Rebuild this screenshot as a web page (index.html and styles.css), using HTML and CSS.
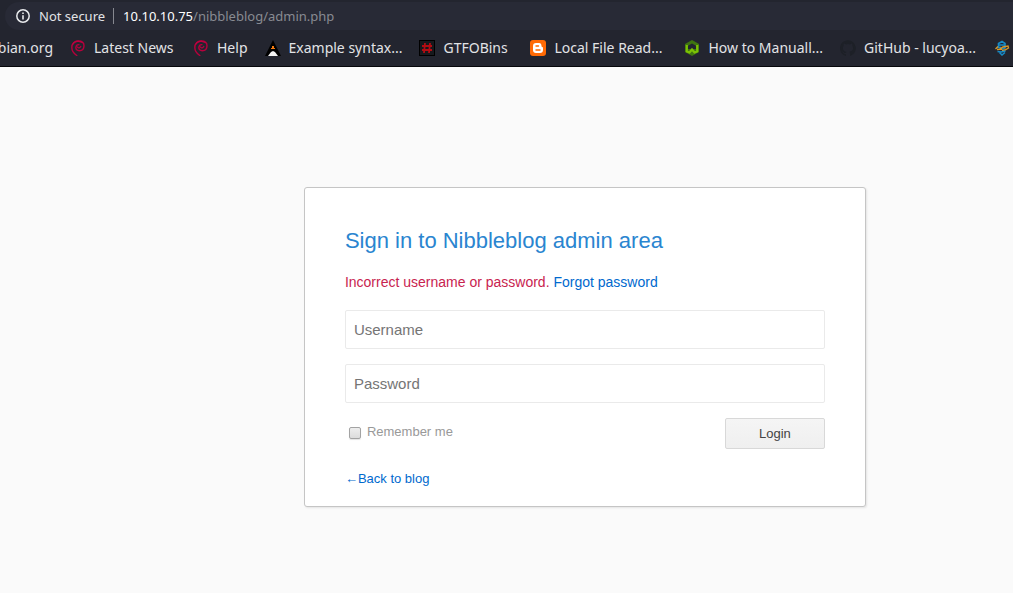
FILE: index.html
```html
<!DOCTYPE html>
<html lang="en">
<head>
<meta charset="utf-8">
<title>Nibbleblog - Sign in</title>
<link rel="stylesheet" href="styles.css">
</head>
<body>
<svg class="defs" aria-hidden="true">
  <symbol id="swirl" viewBox="0 0 16 16">
    <path d="M6.800 15.500C4 13.500 1.800 10.800 1.800 7.400C1.800 3.500 4.500 1 8.300 1C11.800 1 14 3 14 5.800C14 8.800 12 10.700 9.300 10.700C7 10.700 5.700 9.300 5.900 7.300C6.100 5.600 7.400 4.500 8.900 4.600" fill="none" stroke="#b8003c" stroke-width="1.400" stroke-linecap="round"/>
    <path d="M2.600 4.500Q4.500 1.300 8 1.200L12.500 2.500M7.500 7Q9 9.200 10.800 6.500" fill="none" stroke="#c00040" stroke-width="1.200" stroke-linecap="round"/>
  </symbol>
</svg>
<header class="browser">
  <div class="address">
    <svg class="info" viewBox="0 0 14 14" aria-hidden="true"><circle cx="7" cy="7" r="6.200" fill="none" stroke="#e8eaed" stroke-width="1.500"/><path d="M7 6.200V10.500M7 3.500V5" stroke="#e8eaed" stroke-width="1.600"/></svg>
    <span class="security">Not secure</span>
    <span class="url"><span class="host">10.10.10.75</span>/nibbleblog/admin.php</span>
  </div>
  <nav class="bookmarks" aria-label="Bookmarks">
    <a class="bookmark clipped" href="#">bian.org</a>
    <a class="bookmark medium" href="#"><svg viewBox="0 0 16 16"><use href="#swirl"/></svg>Latest News</a>
    <a class="bookmark" href="#"><svg viewBox="0 0 16 16"><use href="#swirl"/></svg>Help</a>
    <a class="bookmark wide" href="#"><svg viewBox="0 0 16 16"><path d="M8 0L16 16H0Z" fill="#000"/><path d="M3 16L6 12L8 11L10 12L13 16Z" fill="#f4f4f4"/><path d="M7 6H9V8H10V9H6V8H7Z" fill="#f47a10"/></svg>Example syntax...</a>
    <a class="bookmark small" href="#"><svg viewBox="0 0 16 16"><path d="M0 0H16V16H0Z" fill="#000"/><path d="M1 1H15V15H1Z" fill="#17191d"/><path d="M6 3L5 13M11 3L10 13M3 6H13M3 10H13" stroke="#b40c12" stroke-width="1.800"/></svg>GTFOBins</a>
    <a class="bookmark wide" href="#"><svg viewBox="0 0 16 16"><rect width="16" height="16" rx="3" fill="#ff6a05"/><path d="M6 3H9C11 3 11.500 4.500 11.500 6Q11.500 7 12.300 7Q13 7 13 8V10Q13 13 10 13H6Q3 13 3 10V6Q3 3 6 3Z" fill="#fff"/><path d="M6 6H8.500M6 10H10" stroke="#ff6a05" stroke-width="1.400" stroke-linecap="round"/></svg>Local File Read...</a>
    <a class="bookmark wide" href="#"><svg viewBox="0 0 16 16"><path d="M8 0L15 4V12L8 16L1 12V4Z" fill="#3f7511"/><path d="M8 3.500L12 5.800V9H4V5.800Z" fill="#23252f"/><path d="M2.800 5V11.500L5.500 12.500L8 9.500L10.500 12.500L13.200 11.500V5" fill="none" stroke="#7cc105" stroke-width="2.200"/></svg>How to Manuall...</a>
    <a class="bookmark wide" href="#"><svg viewBox="0 0 16 16"><path d="M8 .3C3.600.3 0 3.900 0 8.300c0 3.500 2.300 6.500 5.500 7.600.4.1.5-.2.5-.4v-1.500c-2.200.5-2.700-.9-2.700-.9-.4-.9-.9-1.200-.9-1.200-.7-.5.1-.5.1-.5.8.1 1.200.8 1.200.8.7 1.200 1.900.9 2.300.7.1-.5.3-.9.500-1.100-1.800-.2-3.600-.9-3.600-4 0-.9.3-1.600.8-2.100-.1-.2-.4-1 .1-2.100 0 0 .7-.2 2.200.8a7.500 7.500 0 0 1 4 0c1.500-1 2.200-.8 2.200-.8.400 1.100.2 1.900.1 2.100.5.6.8 1.300.8 2.100 0 3.100-1.900 3.700-3.700 3.900.3.3.6.8.6 1.500v2.200c0 .2.100.5.6.4A8 8 0 0 0 8 .3Z" fill="#1d2027"/></svg>GitHub - lucyoa...</a>
    <a class="bookmark" href="#" aria-label="Python bookmark"><svg viewBox="0 0 16 16"><path d="M4.500 7V3.500L8 1.500L11 3.500V8L8 9M3 7.500H7M5 5H11" fill="none" stroke="#168bc8" stroke-width="1.600"/><path d="M1.500 9L4 6.500M5 9.500L9 7L14 6L14.500 8L11 10L8 10.500M3 9.500L8 9" fill="none" stroke="#d5982b" stroke-width="1.400"/><path d="M3.500 11.500L7 12L11.500 11M5.500 12.500L8 15L11 12.500" fill="none" stroke="#168bc8" stroke-width="1.500"/></svg></a>
  </nav>
</header>
<main class="page">
  <form class="card">
    <h1 class="title">Sign in to Nibbleblog admin area</h1>
    <p class="message"><span class="error">Incorrect username or password.</span> <a href="#">Forgot password</a></p>
    <input class="field" type="text" placeholder="Username" aria-label="Username">
    <input class="field" type="password" placeholder="Password" aria-label="Password">
    <div class="actions">
      <label class="remember"><input class="check" type="checkbox">Remember me</label>
      <button class="login" type="submit">Login</button>
    </div>
    <a class="back" href="#">←Back to blog</a>
  </form>
</main>
</body>
</html>
```

FILE: styles.css
```css
* { box-sizing: border-box; }

body {
  margin: 0;
  background: #fafafa;
  font-family: "Liberation Sans", Arial, sans-serif;
}

a { color: #0069ce; text-decoration: none; }

.defs { display: none; }

.browser {
  overflow: hidden;
  background: #23252f;
  border-bottom: 1px solid #06070b;
  font-family: "Noto Sans", sans-serif;
  font-size: 14px;
  line-height: 20px;
  color: #e2e3e6;
}

.address {
  display: flex;
  align-items: center;
  height: 28px;
  margin: 2px 0 0 5px;
  padding-left: 11px;
  background: #282a36;
  border-radius: 14px 0 0 14px;
  font-size: 13px;
}

.info { width: 14px; height: 14px; margin-right: 9px; }

.security {
  height: 16px;
  padding-right: 8px;
  border-right: 1px solid #868890;
  line-height: 16px;
}

.url { padding-left: 9px; color: #898b92; }
.host { color: #fff; }

.bookmarks {
  display: flex;
  align-items: center;
  gap: 17px;
  height: 36px;
  white-space: nowrap;
}

.bookmark {
  display: flex;
  flex: none;
  align-items: center;
  gap: 8px;
  color: #e2e3e6;
}

.bookmark svg { width: 16px; height: 16px; }

.small { min-width: 94px; }
.medium { min-width: 106px; }
.wide { min-width: 137px; }

.clipped {
  justify-content: flex-end;
  width: 53px;
  overflow: hidden;
}

.page { padding: 120px 16px 86px 30%; }

.card {
  max-width: 562px;
  padding: 40px;
  padding-bottom: 19px;
  background: #fff;
  border: 1px solid #c5c5c5;
  border-radius: 3px;
  box-shadow: 1px 1px 2px #e4e4e4;
}

.title {
  margin: 0 0 20px;
  color: #2a85d0;
  font-size: 22px;
  font-weight: 400;
  line-height: 26px;
}

.message {
  margin: 0 0 20px;
  font-size: 14px;
  line-height: 16px;
}

.error { color: #c8234f; }

.field {
  display: block;
  width: 100%;
  height: 39px;
  margin-bottom: 15px;
  padding: 8px;
  border: 1px solid #eaeaea;
  border-radius: 2px;
  font-family: inherit;
  font-size: 15px;
}

.field::placeholder { color: #757575; }

.actions {
  display: flex;
  justify-content: space-between;
  margin-bottom: 22px;
}

.remember {
  display: flex;
  align-items: center;
  gap: 6px;
  height: 27px;
  padding-left: 4px;
  color: #999;
  font-size: 13px;
}

.check {
  width: 12px;
  height: 12px;
  margin: 3px 0 0;
  appearance: none;
  background: linear-gradient(#eee, #dcdcdc);
  border: 1px solid #a3a3a3;
  border-radius: 2px;
  box-shadow: 0 1px 1px #e4e4e4;
}

.check:checked { background: #2a85d0; }

.login {
  width: 100px;
  height: 31px;
  background: linear-gradient(#f5f5f5, #efefef);
  border: 1px solid #d8d8d8;
  border-radius: 2px;
  color: #444;
  font-family: inherit;
  font-size: 13px;
}

.back {
  display: block;
  font-size: 13px;
  line-height: 16px;
}
```
